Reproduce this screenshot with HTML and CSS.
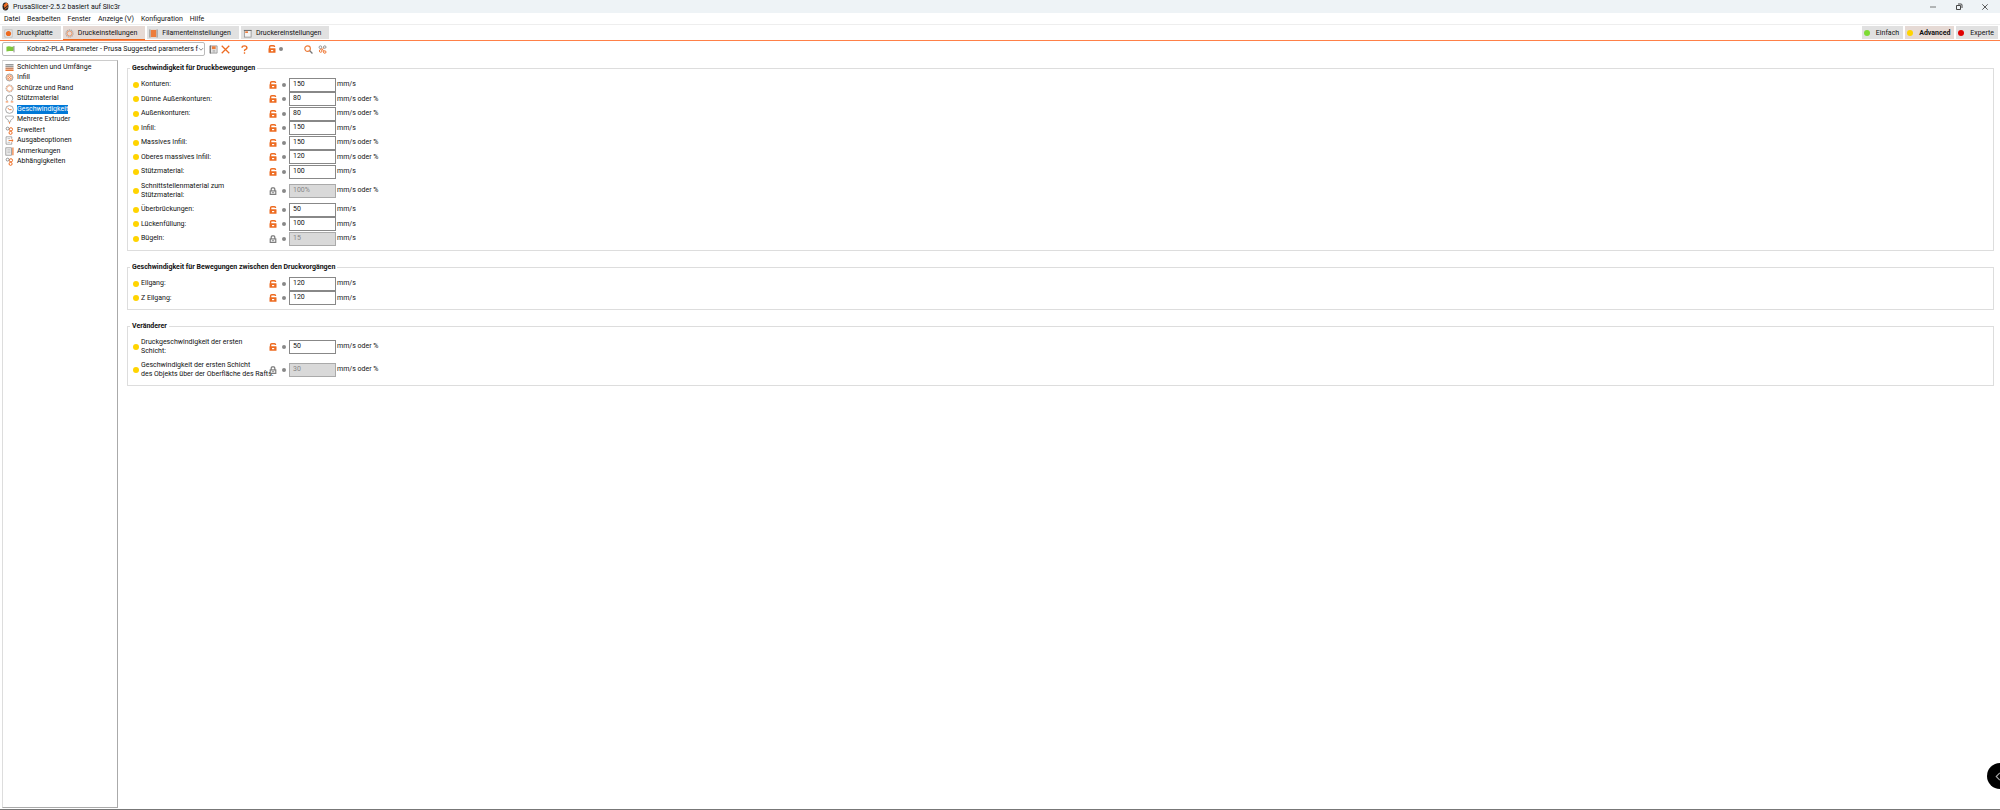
FILE: index.html
```html
<!DOCTYPE html>
<html lang="de">
<head>
<meta charset="UTF-8" />
<meta name="viewport" content="width=device-width, initial-scale=1" />
<title>PrusaSlicer-2.5.2 basiert auf Slic3r</title>
<link rel="stylesheet" href="styles.css">
</head>
<body>

<svg class="sprites" aria-hidden="true">
  <symbol id="i-unlock" viewBox="0 0 8 8"><path d="M1.6 4V1.8Q1.6 .7 2.8 .7H5.4Q6.6 .7 6.6 2" fill="none" stroke="#ed6b21" stroke-width="1.4"/><rect x=".5" y="3.3" width="7" height="4.5" rx=".4" fill="#ed6b21"/><path d="M3 5.6h2.2" stroke="#fff" stroke-width="1.2"/></symbol>
  <symbol id="i-lock" viewBox="0 0 8 8"><path d="M2.2 4V2Q2.2 .8 3.2 .8H4.8Q5.8 .8 5.8 2V4" fill="none" stroke="#777" stroke-width="1.2"/><rect x="1.2" y="3.9" width="5.6" height="3.5" fill="#eee" stroke="#777" stroke-width="1.1"/><path d="M3.2 5.7h1.6" stroke="#777"/></symbol>
  <symbol id="i-gears" viewBox="0 0 10 10"><g fill="none" stroke="#ed6b21" stroke-width="1.1"><circle cx="6.6" cy="3.7" r="1.8"/><circle cx="6.2" cy="7.6" r="1.7"/></g><circle cx="2.9" cy="2.9" r="1.6" fill="none" stroke="#888"/></symbol>
</svg>

<header class="titlebar">
  <svg class="app-icon" viewBox="0 0 8 9"><ellipse cx="4" cy="4.5" rx="3" ry="4" fill="#222"/><path d="M2 3 5 .6 6.8 2.5 3 6z" fill="#ed6b21"/><path d="M3 7.6 6.6 4.6" stroke="#ed6b21"/></svg>
  <span class="app-title">PrusaSlicer-2.5.2 basiert auf Slic3r</span>
  <div class="window-buttons">
    <button aria-label="Minimieren"><svg viewBox="0 0 8 8"><path d="M1 4h6" stroke="#555" stroke-width=".8"/></svg></button>
    <button aria-label="Verkleinern"><svg viewBox="0 0 8 8"><path d="M1.5 2.5h4v4h-4zM3 1h3q1 0 1 1v3" fill="none" stroke="#333" stroke-width=".9"/></svg></button>
    <button aria-label="Schließen"><svg viewBox="0 0 8 8"><path d="M1.3 1.3l5.4 5.4M6.7 1.3 1.3 6.7" stroke="#333" stroke-width=".8"/></svg></button>
  </div>
</header>

<nav class="menubar">
  <button>Datei</button>
  <button>Bearbeiten</button>
  <button>Fenster</button>
  <button>Anzeige (V)</button>
  <button>Konfiguration</button>
  <button>Hilfe</button>
</nav>

<div class="tabbar">
  <button class="tab"><svg viewBox="0 0 10 10"><rect x="1" y="1" width="8" height="8" fill="#eee" stroke="#aaa" stroke-width=".7"/><circle cx="5" cy="5" r="2.9" fill="#ed6b21"/></svg>Druckplatte</button>
  <button class="tab active"><svg viewBox="0 0 10 10"><circle cx="5" cy="5" r="4" fill="none" stroke="#aaa" stroke-width="1.2" stroke-dasharray="1.5 .7"/><circle cx="5" cy="5" r="2.8" fill="none" stroke="#ed8a50" stroke-width=".9"/></svg>Druckeinstellungen</button>
  <button class="tab"><svg viewBox="0 0 10 10"><path d="M1 .5v9M9 .5v9" stroke="#777" stroke-width=".9"/><rect x="2" y="1" width="6" height="8" fill="#ed7d3c"/></svg>Filamenteinstellungen</button>
  <button class="tab"><svg viewBox="0 0 10 10"><rect x="1.5" y="1.5" width="7.5" height="7.5" fill="#f4f4f4" stroke="#888" stroke-width=".8"/><path d="M1 1.6h8.5" stroke="#666"/><path d="M2.5 3.5h3" stroke="#ed6b21" stroke-width="1.6"/></svg>Druckereinstellungen</button>
  <div class="modes">
    <button class="mode"><i class="dot green"></i>Einfach</button>
    <button class="mode active"><i class="dot yellow"></i>Advanced</button>
    <button class="mode"><i class="dot red"></i>Experte</button>
  </div>
</div>

<div class="toolbar">
  <div class="preset">
    <svg class="flag" viewBox="0 0 10 8"><path d="M.5 1.6Q3 .6 5 1.3T8.5 .9V6Q7 6.6 5 6.2T.5 6.8z" fill="#7ec63c"/><path d="M8.9 .6v7.2" stroke="#777" stroke-width=".9"/></svg>
    <select aria-label="Druckprofil"><option>Kobra2-PLA Parameter - Prusa Suggested parameters f</option></select>
    <svg class="chevron" viewBox="0 0 6 6"><path d="M1 2.2l2 2 2-2" fill="none" stroke="#555" stroke-width=".7"/></svg>
  </div>
  <div class="tools">
    <button aria-label="Speichern"><svg viewBox="0 0 10 10"><path d="M1 1h8v8H1z" fill="#e8e8e8" stroke="#888" stroke-width=".8"/><path d="M1.6 .6v8.8" stroke="#777" stroke-width="1.3"/><rect x="3.2" y="1.4" width="4.2" height="3.2" fill="#ed7d3c"/><path d="M4 6.3h3M4 7.7h3" stroke="#888" stroke-width=".6"/></svg></button>
    <button aria-label="Löschen"><svg viewBox="0 0 10 10"><path d="M.8 .8l8.4 8.4M9.2 .8 .8 9.2" stroke="#ed6b21" stroke-width="1.4"/></svg></button>
  </div>
  <button aria-label="Hilfe"><svg viewBox="0 0 10 10"><path d="M2.2 3Q2.4 1 5 1T7.7 3.2Q7.7 4.2 6.2 4.9T5 6.9M5 8v1.6" fill="none" stroke="#ed6b21" stroke-width="1.5"/></svg></button>
  <div class="tools reset">
    <button aria-label="Auf Systemwerte zurücksetzen"><svg class="lock"><use href="#i-unlock"/></svg></button>
    <button class="undo" aria-label="Zurücksetzen"></button>
  </div>
  <div class="tools search">
    <button aria-label="Suchen"><svg viewBox="0 0 10 10"><circle cx="4" cy="4" r="3.1" fill="none" stroke="#ed7d3c" stroke-width="1.3"/><path d="M6.4 6.4l3 3" stroke="#777" stroke-width="1.4"/></svg></button>
    <button aria-label="Vergleichen"><svg viewBox="0 0 10 10"><g fill="none"><circle cx="2.7" cy="2.5" r="1.5" stroke="#888"/><circle cx="7.5" cy="2.3" r="1.4" stroke="#888"/><circle cx="3" cy="6.6" r="1.5" stroke="#ed6b21"/><circle cx="7.5" cy="7.8" r="1.4" stroke="#ed6b21"/><path d="M4 5.5l2.6-2.2M3.8 3.6l3 3.2" stroke="#ed6b21" stroke-width=".8"/></g></svg></button>
  </div>
</div>

<div class="content">
  <ul class="tree">
    <li><a href="#"><svg viewBox="0 0 10 10"><path d="M.5 1.8h9M.5 3.8h9" stroke="#999" stroke-width="1.3"/><path d="M.5 5.8h9" stroke="#bf7a55" stroke-width="1.5"/><path d="M.5 8h9" stroke="#ed6b21" stroke-width="1.6"/></svg><span>Schichten und Umfänge</span></a></li>
    <li><a href="#"><svg viewBox="0 0 10 10"><circle cx="5" cy="5" r="3.9" fill="#fbe3d4" stroke="#888" stroke-width=".8"/><path d="M3 3l4 4M5 2l3 3M2 5l3 3M7 3 3 7M5 2 2 5M8 5 5 8" stroke="#ed6b21" stroke-width=".6"/></svg><span>Infill</span></a></li>
    <li><a href="#"><svg viewBox="0 0 10 10"><circle cx="5" cy="5" r="4" fill="none" stroke="#999" stroke-width=".8" stroke-dasharray="2 .8"/><circle cx="5" cy="5" r="3.1" fill="none" stroke="#ed8a50" stroke-width=".8"/></svg><span>Schürze und Rand</span></a></li>
    <li><a href="#"><svg viewBox="0 0 10 10"><path d="M2.6 7.6Q1.4 6.2 1.4 4.8A3.6 3.6 0 0 1 8.6 4.8Q8.6 6.2 7.4 7.6" fill="none" stroke="#888" stroke-width=".9"/><path d="M.8 8.8h2.8M6.4 8.8h2.8" stroke="#ed6b21"/></svg><span>Stützmaterial</span></a></li>
    <li><a href="#" class="selected"><svg viewBox="0 0 10 10"><circle cx="5" cy="5" r="4.3" fill="none" stroke="#888" stroke-width=".8"/><path d="M3 3.6l2.1 1.6h2.2" fill="none" stroke="#ed6b21" stroke-width="1"/></svg><span>Geschwindigkeit</span></a></li>
    <li><a href="#"><svg viewBox="0 0 10 10"><path d="M.7 1.2h8.6v2.3L6.3 5.6v2H3.7v-2L.7 3.5z" fill="none" stroke="#999" stroke-width=".8"/><path d="M5 8v1.6" stroke="#ed6b21"/></svg><span>Mehrere Extruder</span></a></li>
    <li><a href="#"><svg><use href="#i-gears"/></svg><span>Erweitert</span></a></li>
    <li><a href="#"><svg viewBox="0 0 10 10"><path d="M7.5 3V.9h-6.3v8.2h6.3V7" fill="none" stroke="#888" stroke-width=".8"/><path d="M2.8 3h3M2.8 7h3" stroke="#999" stroke-width=".7"/><path d="M4 5h5M7.3 3.4 9 5 7.3 6.6" fill="none" stroke="#ed6b21" stroke-width="1"/></svg><span>Ausgabeoptionen</span></a></li>
    <li><a href="#"><svg viewBox="0 0 10 10"><rect x=".9" y=".9" width="6.4" height="8.2" fill="#eee" stroke="#888" stroke-width=".8"/><path d="M2.6 3h3.4M2.6 4.6h3.4M2.6 6.2h3.4" stroke="#aaa" stroke-width=".6"/><path d="M8.8 .6v8.6" stroke="#ed6b21" stroke-width="1.2"/></svg><span>Anmerkungen</span></a></li>
    <li><a href="#"><svg><use href="#i-gears"/></svg><span>Abhängigkeiten</span></a></li>
  </ul>

  <main class="settings">
    <fieldset>
      <legend>Geschwindigkeit für Druckbewegungen</legend>
      <div class="row"><i class="dot yellow"></i><label for="perimeter">Konturen:</label><button aria-label="Systemwert"><svg class="lock"><use href="#i-unlock"/></svg></button><button class="undo" aria-label="Zurücksetzen"></button><input id="perimeter" value="150"><span>mm/s</span></div>
      <div class="row"><i class="dot yellow"></i><label for="small">Dünne Außenkonturen:</label><button aria-label="Systemwert"><svg class="lock"><use href="#i-unlock"/></svg></button><button class="undo" aria-label="Zurücksetzen"></button><input id="small" value="80"><span>mm/s oder %</span></div>
      <div class="row"><i class="dot yellow"></i><label for="external">Außenkonturen:</label><button aria-label="Systemwert"><svg class="lock"><use href="#i-unlock"/></svg></button><button class="undo" aria-label="Zurücksetzen"></button><input id="external" value="80"><span>mm/s oder %</span></div>
      <div class="row"><i class="dot yellow"></i><label for="infill">Infill:</label><button aria-label="Systemwert"><svg class="lock"><use href="#i-unlock"/></svg></button><button class="undo" aria-label="Zurücksetzen"></button><input id="infill" value="150"><span>mm/s</span></div>
      <div class="row"><i class="dot yellow"></i><label for="solid">Massives Infill:</label><button aria-label="Systemwert"><svg class="lock"><use href="#i-unlock"/></svg></button><button class="undo" aria-label="Zurücksetzen"></button><input id="solid" value="150"><span>mm/s oder %</span></div>
      <div class="row"><i class="dot yellow"></i><label for="top">Oberes massives Infill:</label><button aria-label="Systemwert"><svg class="lock"><use href="#i-unlock"/></svg></button><button class="undo" aria-label="Zurücksetzen"></button><input id="top" value="120"><span>mm/s oder %</span></div>
      <div class="row"><i class="dot yellow"></i><label for="support">Stützmaterial:</label><button aria-label="Systemwert"><svg class="lock"><use href="#i-unlock"/></svg></button><button class="undo" aria-label="Zurücksetzen"></button><input id="support" value="100"><span>mm/s</span></div>
      <div class="row tall"><i class="dot yellow"></i><label for="interface">Schnittstellenmaterial zum<br>Stützmaterial:</label><button aria-label="Systemwert"><svg class="lock"><use href="#i-lock"/></svg></button><button class="undo" aria-label="Zurücksetzen"></button><input id="interface" value="100%" disabled><span>mm/s oder %</span></div>
      <div class="row"><i class="dot yellow"></i><label for="bridge">Überbrückungen:</label><button aria-label="Systemwert"><svg class="lock"><use href="#i-unlock"/></svg></button><button class="undo" aria-label="Zurücksetzen"></button><input id="bridge" value="50"><span>mm/s</span></div>
      <div class="row"><i class="dot yellow"></i><label for="gap">Lückenfüllung:</label><button aria-label="Systemwert"><svg class="lock"><use href="#i-unlock"/></svg></button><button class="undo" aria-label="Zurücksetzen"></button><input id="gap" value="100"><span>mm/s</span></div>
      <div class="row"><i class="dot yellow"></i><label for="ironing">Bügeln:</label><button aria-label="Systemwert"><svg class="lock"><use href="#i-lock"/></svg></button><button class="undo" aria-label="Zurücksetzen"></button><input id="ironing" value="15" disabled><span>mm/s</span></div>
    </fieldset>

    <fieldset>
      <legend>Geschwindigkeit für Bewegungen zwischen den Druckvorgängen</legend>
      <div class="row"><i class="dot yellow"></i><label for="travel">Eilgang:</label><button aria-label="Systemwert"><svg class="lock"><use href="#i-unlock"/></svg></button><button class="undo" aria-label="Zurücksetzen"></button><input id="travel" value="120"><span>mm/s</span></div>
      <div class="row"><i class="dot yellow"></i><label for="travel-z">Z Eilgang:</label><button aria-label="Systemwert"><svg class="lock"><use href="#i-unlock"/></svg></button><button class="undo" aria-label="Zurücksetzen"></button><input id="travel-z" value="120"><span>mm/s</span></div>
    </fieldset>

    <fieldset>
      <legend>Veränderer</legend>
      <div class="row tall"><i class="dot yellow"></i><label for="first">Druckgeschwindigkeit der ersten<br>Schicht:</label><button aria-label="Systemwert"><svg class="lock"><use href="#i-unlock"/></svg></button><button class="undo" aria-label="Zurücksetzen"></button><input id="first" value="50"><span>mm/s oder %</span></div>
      <div class="row tall"><i class="dot yellow"></i><label for="raft">Geschwindigkeit der ersten Schicht<br>des Objekts über der Oberfläche des Rafts:</label><button aria-label="Systemwert"><svg class="lock"><use href="#i-lock"/></svg></button><button class="undo" aria-label="Zurücksetzen"></button><input id="raft" value="30" disabled><span>mm/s oder %</span></div>
    </fieldset>
  </main>
</div>

<button class="drawer" aria-label="Einblenden"><svg viewBox="0 0 6 10"><path d="M5 1 1 5l4 4" fill="none" stroke="#aaa" stroke-width="1.2"/></svg></button>

</body>
</html>
```

FILE: styles.css
```css
* {
  box-sizing: border-box;
}
body {
  margin: 0;
  height: 100vh;
  display: flex;
  flex-direction: column;
  overflow: hidden;
  background: #fff;
  border-bottom: 1px solid #777;
  color: #111;
  font: 7px/9px Roboto, "Noto Sans", sans-serif;
}
button, input, select {
  font: inherit;
  color: inherit;
  margin: 0;
  padding: 0;
  border: 0;
  background: none;
}
button {
  display: flex;
  align-items: center;
  white-space: nowrap;
}
svg {
  display: block;
  flex: none;
  width: 9px;
  height: 9px;
}
.sprites {
  position: absolute;
  width: 0;
  height: 0;
}

/* Titel und Menü */
.titlebar {
  flex: none;
  display: flex;
  align-items: center;
  height: 13px;
  padding-left: 1px;
  background: #eef3f6;
}
.app-title {
  margin-left: 3px;
  padding-top: 1px;
}
.window-buttons {
  display: flex;
  gap: 18px;
  margin-left: auto;
  padding-right: 11px;
}
.window-buttons svg {
  width: 8px;
  height: 8px;
}
.menubar {
  flex: none;
  display: flex;
  gap: 7px;
  height: 12px;
  padding: 1px 0 0 4px;
  border-bottom: 1px solid #eee;
}

/* Reiter */
.tabbar {
  flex: none;
  display: flex;
  gap: 2px;
  padding: 1px 2px 0;
  border-bottom: 1px solid #ff8048;
}
.tab {
  height: 14px;
  gap: 4px;
  padding: 1px 8px 0 2px;
  background: #e1e1e1;
  border-bottom: 1px solid #fff;
}
.tab.active {
  background: #e6dad5;
  border-bottom-color: #ed6b21;
}
.modes {
  display: flex;
  gap: 2px;
  margin-left: auto;
}
.mode {
  height: 13px;
  gap: 6px;
  padding: 1px 4px 0 2px;
  background: #e1e1e1;
}
.mode.active {
  background: #e6dad5;
  font-weight: bold;
}
.dot {
  flex: none;
  width: 6px;
  height: 6px;
  border-radius: 50%;
}
.green { background: #7ddb34; }
.yellow { background: #ffd400; }
.red { background: #e00000; }

/* Werkzeugleiste */
.toolbar {
  flex: none;
  display: flex;
  align-items: center;
  height: 18px;
  padding: 0 2px 2px;
}
.preset {
  position: relative;
  width: 203px;
  margin-right: 4px;
}
.preset select {
  display: block;
  appearance: none;
  width: 100%;
  height: 14px;
  padding: 0 4px 0 24px;
  border: 1px solid #bbb;
  border-radius: 2px;
}
.flag, .chevron {
  position: absolute;
  top: 3px;
}
.flag {
  left: 4px;
  height: 8px;
}
.chevron {
  right: 1px;
  top: 4px;
  width: 6px;
  height: 6px;
}
.tools {
  display: flex;
  align-items: center;
  gap: 3px;
  margin-right: 10px;
}
.reset {
  margin: 0 21px 0 19px;
}
.search {
  gap: 5px;
}
.lock {
  width: 8px;
  height: 8px;
}
.undo {
  width: 4px;
  height: 4px;
  border-radius: 50%;
  background: #888;
}

/* Seitenbaum */
.content {
  flex: 1;
  display: flex;
  min-height: 0;
}
.tree {
  flex: none;
  width: 116px;
  margin: 1px 0 1px 2px;
  padding: 1px 0 0 2px;
  list-style: none;
  border: 1px solid #aaa;
  border-left-color: #ddd;
  border-top-color: #ccc;
}
.tree li {
  height: 10px;
}
.tree li:nth-child(even) {
  height: 11px;
}
.tree a {
  display: flex;
  align-items: center;
  gap: 3px;
  height: 100%;
  color: inherit;
  text-decoration: none;
}
.tree .selected span {
  background: #0078d7;
  color: #fff;
}

/* Einstellungen */
.settings {
  flex: 1;
  padding: 5px 6px 0 9px;
}
fieldset {
  min-width: 0;
  margin: 0 0 12px;
  padding: 4px 0 4px 5px;
  border: 1px solid #ddd;
}
legend {
  margin-left: -3px;
  padding: 0 2px;
  font-weight: bold;
}
.row {
  display: flex;
  align-items: center;
  height: 14px;
  white-space: nowrap;
}
.row:nth-of-type(odd) {
  height: 15px;
}
.row.tall {
  height: 23px;
}
.row label {
  width: 128px;
  margin-left: 2px;
}
.row .undo {
  margin: 0 3px 0 5px;
}
.row input {
  width: 47px;
  height: 14px;
  margin-right: 1px;
  padding: 0 3px 2px;
  border: 1px solid #888;
  background: #fff;
}
.row input:disabled {
  background: #d9d9d9;
  border-color: #aaa;
  color: #888;
}

.drawer {
  position: fixed;
  right: -13px;
  bottom: 21px;
  width: 26px;
  height: 26px;
  padding-left: 8px;
  border-radius: 50%;
  background: #000;
}
.drawer svg {
  width: 6px;
}
```
